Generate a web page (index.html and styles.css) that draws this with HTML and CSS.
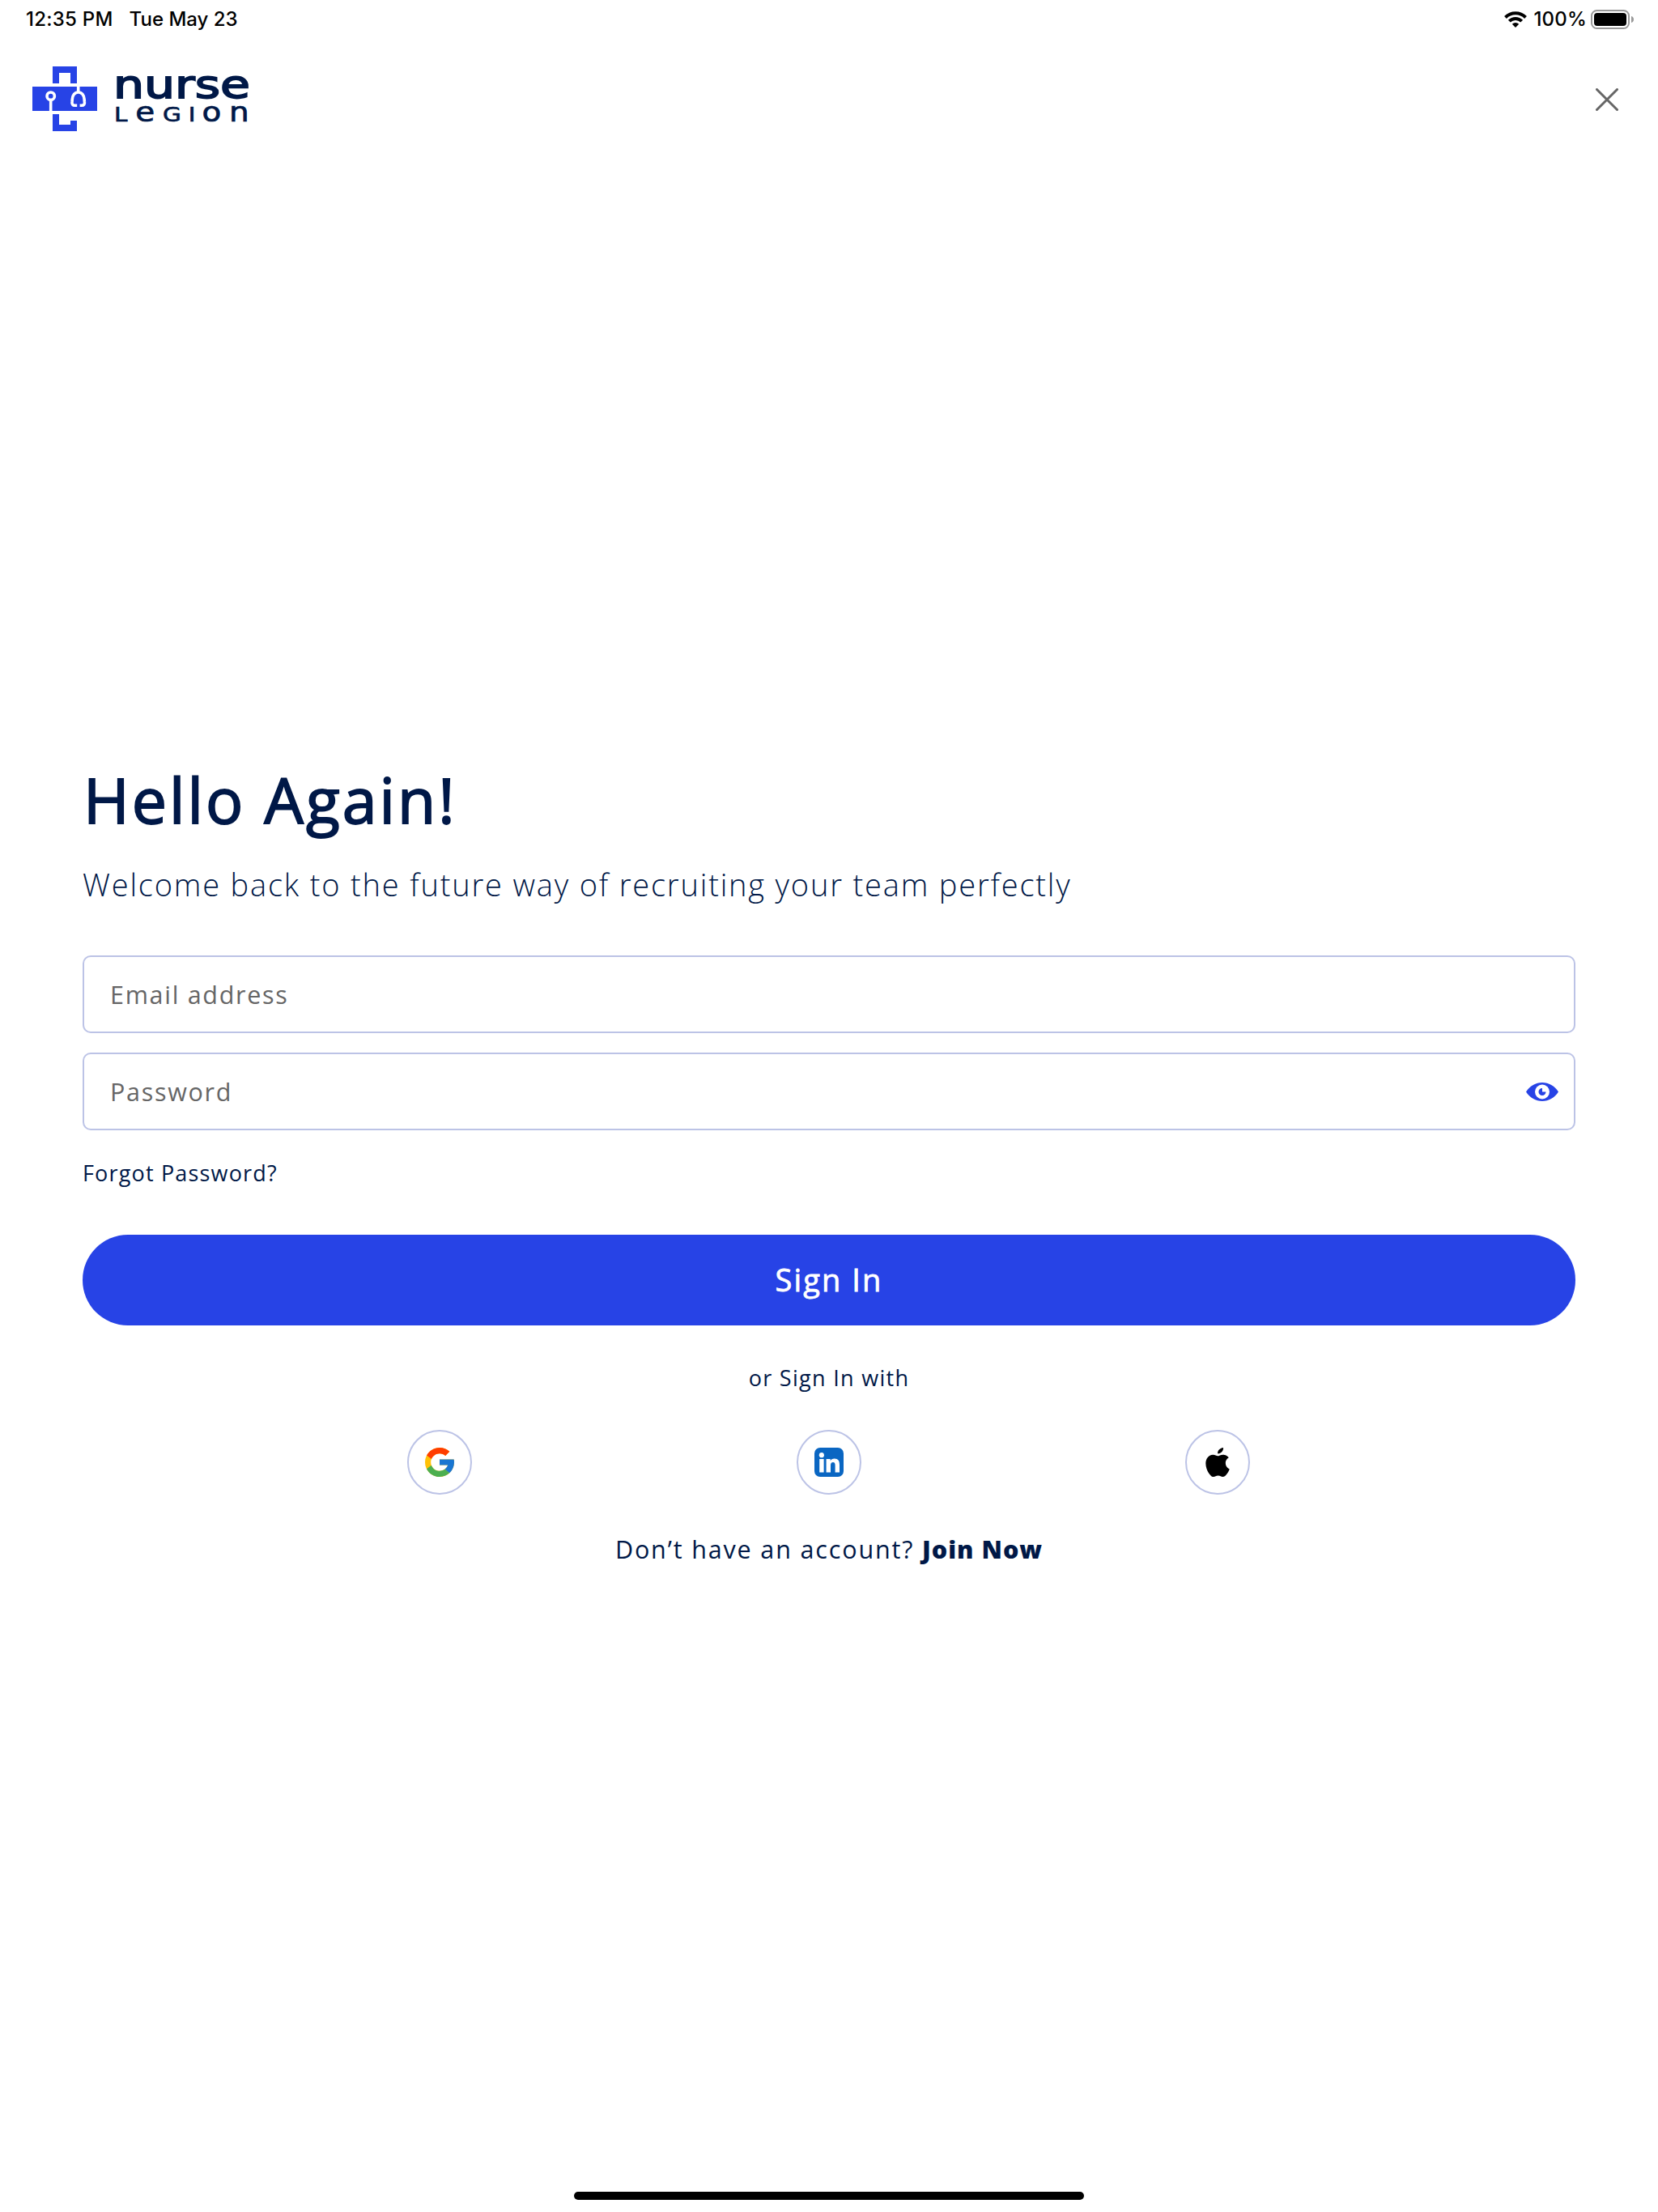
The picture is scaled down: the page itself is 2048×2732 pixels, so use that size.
FILE: index.html
```html
<!DOCTYPE html>
<html lang="en">
<head>
    <meta charset="UTF-8">
    <meta name="viewport" content="width=device-width, initial-scale=1.0">
    <title>Nurse Legion - Sign In</title>
    <link rel="stylesheet" href="styles.css">
</head>
<body>
    <div class="status-bar">
        <div class="status-left">
            <span class="time">12:35 PM</span>
            <span class="date">Tue May 23</span>
        </div>
        <div class="status-right">
            <svg class="wifi" viewBox="0 0 28 20">
                <path d="M1.5 7.500a17.800 17.800 0 0 1 25 0" fill="none" stroke="#000" stroke-width="4"/>
                <path d="M6.300 12.200a10.800 10.800 0 0 1 15.400 0" fill="none" stroke="#000" stroke-width="4"/>
                <path d="M14 20l-4.200-4.200a6 6 0 0 1 8.400 0z"/>
            </svg>
            <span class="percent">100%</span>
            <svg class="battery" viewBox="0 0 54 24">
                <rect x="1" y="1" width="46" height="22" rx="6.5" fill="none" stroke="#999" stroke-width="2"/>
                <rect x="4" y="4" width="40" height="16" rx="4"/>
                <path d="M50 8c2 .6 3 2 3 4s-1 3.400-3 4z" fill="#999"/>
            </svg>
        </div>
    </div>

    <header>
        <a href="#" class="logo">
            <svg class="logo-mark" viewBox="0 0 80 80">
                <g fill="#2743e6">
                    <path d="M25 0h30v21h-8V8H33v13h-8z"/>
                    <path d="M0 25h80v30H0z"/>
                    <path d="M25 59h8v13h14v-5h8v13H25z"/>
                </g>
                <g fill="none" stroke="#fff" stroke-width="3.6">
                    <circle cx="22.7" cy="36.7" r="4.7"/>
                    <path d="M22.7 41v14.500"/>
                    <path d="M56.700 24.500v7"/>
                    <path d="M55.200 48.200h-2.700c-2.700 0-3.900-1.700-3.500-4.200l.3-3.500c.4-5 3.200-8.200 7.400-8.700 4.200.5 7 3.700 7.400 8.700l.3 3.500c.4 2.500-.8 4.200-3.500 4.200h-2.300"/>
                </g>
            </svg>
            <svg class="logo-name" viewBox="0 0 166 70">
                <text class="nurse" x="-2" y="34" textLength="169" lengthAdjust="spacingAndGlyphs">nurse</text>
                <text class="legion" y="63" x="-.8 21.5 50 77 91.2 119.6"><tspan class="cap">L</tspan>e<tspan class="cap">GI</tspan>on</text>
            </svg>
        </a>
        <a href="#" class="close">
            <svg viewBox="0 0 28 28">
                <path d="M1.500 1.500l25 25m0-25l-25 25" stroke="#666" stroke-width="3" stroke-linecap="round"/>
            </svg>
        </a>
    </header>

    <main>
        <h1>Hello Again!</h1>
        <p class="subtitle">Welcome back to the future way of recruiting your team perfectly</p>
        <form>
            <div class="field">
                <input type="email" placeholder="Email address">
            </div>
            <div class="field">
                <input type="password" placeholder="Password">
                <svg class="eye" viewBox="0 0 40 23">
                    <path d="M0 11.500C5 4 12 0 20 0s15 4 20 11.500C35 19 28 23 20 23S5 19 0 11.500z" fill="#2743e6"/>
                    <circle cx="20" cy="11.500" r="9" fill="#fff"/>
                    <path d="M20 7v4.500h4.500A4.500 4.500 0 1 1 20 7z" fill="#2743e6"/>
                </svg>
            </div>
            <a href="#" class="forgot">Forgot Password?</a>
            <button type="button" class="sign-in">Sign In</button>
        </form>
        <p class="or">or Sign In with</p>
        <div class="social">
            <a href="#">
                <svg viewBox="4 4 40 40">
                    <path fill="#FFC107" d="M43.611 20.083H42V20H24v8h11.303C33.654 32.657 29.223 36 24 36c-6.627 0-12-5.373-12-12s5.373-12 12-12c3.059 0 5.842 1.154 7.961 3.039l5.657-5.657C34.046 6.053 29.268 4 24 4 12.955 4 4 12.955 4 24s8.955 20 20 20 20-8.955 20-20c0-1.341-.138-2.650-.389-3.917z"/>
                    <path fill="#FF3D00" d="M6.306 14.691l6.571 4.819C14.655 15.108 18.961 12 24 12c3.059 0 5.842 1.154 7.961 3.039l5.657-5.657C34.046 6.053 29.268 4 24 4 16.318 4 9.656 8.337 6.306 14.691z"/>
                    <path fill="#4CAF50" d="M24 44c5.166 0 9.860-1.977 13.409-5.192l-6.190-5.238C29.211 35.091 26.715 36 24 36c-5.202 0-9.619-3.317-11.283-7.946l-6.522 5.025C9.505 39.556 16.227 44 24 44z"/>
                    <path fill="#1976D2" d="M43.611 20.083H42V20H24v8h11.303c-.792 2.237-2.231 4.166-4.087 5.571l6.193 5.238C36.971 39.205 44 34 44 24c0-1.341-.138-2.650-.389-3.917z"/>
                </svg>
            </a>
            <a href="#">
                <svg viewBox="0 0 36 36">
                    <rect width="36" height="36" rx="7" fill="#0a66c2"/>
                    <circle cx="8.900" cy="9.200" r="3.100" fill="#fff"/>
                    <path d="M6.200 14h5.400v16.400H6.200zM14.600 14h5.100v2.300c.9-1.600 2.600-2.700 5-2.700 4.700 0 6.300 2.900 6.300 7.400v9.400h-5.400v-8.500c0-2.200-.6-3.800-2.600-3.800-2.100 0-3 1.500-3 3.800v8.500h-5.400z" fill="#fff"/>
                </svg>
            </a>
            <a href="#">
                <svg viewBox="0 0 24 24">
                    <path d="M12.152 6.896c-.948 0-2.415-1.078-3.960-1.040-2.040.027-3.910 1.183-4.961 3.014-2.117 3.675-.546 9.103 1.519 12.090 1.013 1.454 2.208 3.090 3.792 3.039 1.520-.065 2.090-.987 3.935-.987 1.831 0 2.350.987 3.960.948 1.637-.026 2.676-1.480 3.676-2.948 1.156-1.688 1.636-3.325 1.662-3.415-.039-.013-3.182-1.221-3.220-4.857-.026-3.040 2.480-4.494 2.597-4.559-1.429-2.090-3.623-2.324-4.390-2.376-2-.156-3.675 1.090-4.610 1.090z"/>
                    <path d="M16.700 0c.2 2.700-2 5-4.700 4.900C11.900 2.200 14.100.2 16.700 0z"/>
                </svg>
            </a>
        </div>
        <p class="join">Don’t have an account? <a href="#">Join Now</a></p>
    </main>

    <div class="home-indicator"></div>
</body>
</html>
```
FILE: styles.css
```css
* {
    box-sizing: border-box;
}
body {
    margin: 0;
    height: 2732px;
    display: flex;
    flex-direction: column;
    background-color: #fff;
    color: #001847;
    font-family: "Open Sans", sans-serif;
}
a {
    color: inherit;
    text-decoration: none;
}
svg {
    display: block;
}
h1, p {
    margin: 0;
}

/* status bar */
.status-bar {
    height: 47px;
    padding: 0 29px 0 32px;
    display: flex;
    align-items: center;
    justify-content: space-between;
    color: #000;
    font-family: Inter, sans-serif;
    font-size: 24px;
    font-weight: 500;
}
.status-left, .status-right {
    display: flex;
    align-items: center;
}
.status-left {
    gap: 20px;
}
.time {
    letter-spacing: .25px;
}
.wifi {
    width: 28px;
    height: 20px;
    margin-right: 8px;
}
.percent {
    margin-right: 5px;
    letter-spacing: .2px;
}
.battery {
    width: 54px;
    height: 24px;
}

/* header */
header {
    padding: 35px 49px 0 40px;
    display: flex;
    justify-content: space-between;
    align-items: center;
}
.logo {
    display: flex;
}
.logo-mark {
    width: 80px;
    height: 80px;
    margin-right: 22px;
}
.logo-name {
    width: 166px;
    height: 70px;
    margin-top: 5px;
    overflow: visible;
    fill: #001847;
    stroke: #001847;
    font-family: "DejaVu Sans", sans-serif;
}
.logo-name .nurse {
    font-size: 48px;
    stroke-width: 1.8px;
}
.logo-name .legion {
    font-size: 33px;
    stroke-width: .7px;
    transform: scaleX(1.18);
}
.logo-name .cap {
    font-size: 25px;
}
.close {
    padding-top: 1px;
}
.close svg {
    width: 28px;
    height: 28px;
}

/* sign in form */
main {
    margin: 776px 102px 0;
}
h1 {
    padding-left: 1px;
    font-size: 77px;
    font-weight: 500;
    line-height: 99px;
    letter-spacing: 3px;
    -webkit-text-stroke: 1.8px #001847;
}
.subtitle {
    margin-top: 25px;
    font-size: 38px;
    font-weight: 300;
    line-height: 60px;
    letter-spacing: 1.82px;
}
form {
    margin-top: 58px;
    display: flex;
    flex-direction: column;
}
.field {
    height: 96px;
    margin-bottom: 24px;
    padding: 0 19px 0 32px;
    display: flex;
    align-items: center;
    border: 2px solid #bcc3e6;
    border-radius: 10px;
}
.field input {
    flex: 1;
    padding: 0;
    border: 0;
    outline: none;
    background: none;
    font-family: inherit;
    font-size: 30.5px;
    letter-spacing: 1.7px;
}
.field input::placeholder {
    color: #666;
}
.eye {
    width: 40px;
    height: 23px;
}
.forgot {
    margin-top: 9px;
    align-self: flex-start;
    font-size: 27px;
    line-height: 40px;
    letter-spacing: 1.17px;
}
.sign-in {
    height: 112px;
    margin-top: 56px;
    padding: 0 0 2px;
    border: 0;
    border-radius: 56px;
    background-color: #2743e6;
    color: #fff;
    font-family: inherit;
    font-size: 38px;
    font-weight: 500;
    letter-spacing: 2.1px;
    -webkit-text-stroke: .8px #fff;
}
.or {
    margin-top: 45px;
    font-size: 27px;
    line-height: 40px;
    letter-spacing: 1.3px;
    text-align: center;
}
.social {
    margin: 44px 1px 0 0;
    display: flex;
    justify-content: center;
    gap: 400.5px;
}
.social a {
    width: 80px;
    height: 80px;
    display: flex;
    align-items: center;
    justify-content: center;
    border: 2px solid #bcc3e6;
    border-radius: 50%;
}
.social svg {
    width: 36px;
    height: 36px;
}
.join {
    margin-top: 45px;
    font-size: 30.5px;
    line-height: 44px;
    letter-spacing: 1.85px;
    text-align: center;
}
.join a {
    font-weight: 800;
    letter-spacing: 1px;
}

.home-indicator {
    width: 630px;
    height: 10px;
    margin: auto auto 15px;
    border-radius: 5px;
    background-color: #000;
}
```
